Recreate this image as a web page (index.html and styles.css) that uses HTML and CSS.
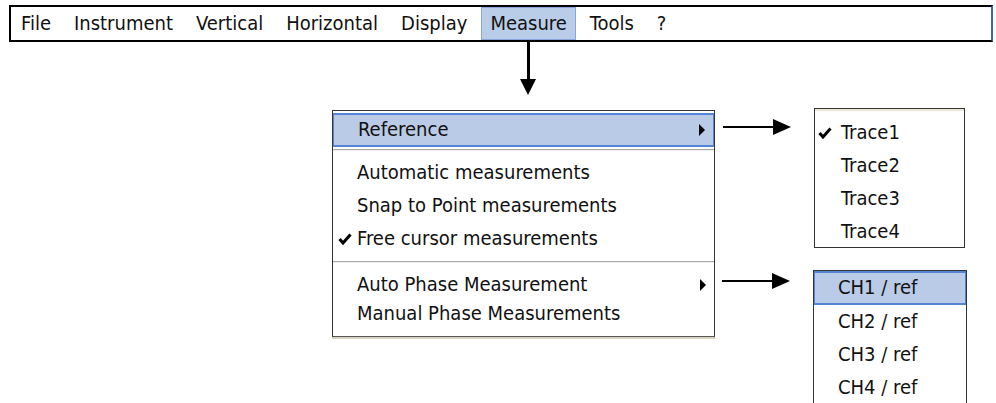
FILE: index.html
```html
<!DOCTYPE html>
<html>
<head>
<meta charset="utf-8">
<link rel="stylesheet" href="styles.css">
</head>
<body>
<div class="page">
  <div class="menubar">
    <span class="mi">File</span>
    <span class="mi">Instrument</span>
    <span class="mi">Vertical</span>
    <span class="mi">Horizontal</span>
    <span class="mi">Display</span>
    <span class="mi active">Measure</span>
    <span class="mi">Tools</span>
    <span class="mi">?</span>
  </div>

  <svg class="arrow arrow-down" width="20" height="54" viewBox="0 0 20 54">
    <rect x="9" y="0" width="3" height="38" fill="#000"/>
    <polygon points="2,37 18,37 10,53" fill="#000"/>
  </svg>

  <div class="menu main-menu">
    <div class="item hl">Reference<span class="sub"></span></div>
    <div class="sep sep1"></div>
    <div class="item">Automatic measurements</div>
    <div class="item">Snap to Point measurements</div>
    <div class="item"><svg class="check" width="14" height="12" viewBox="0 0 14 12"><polyline points="1.5,6 5,10 12.5,1.5" fill="none" stroke="#000" stroke-width="3"/></svg>Free cursor measurements</div>
    <div class="sep sep2"></div>
    <div class="item short">Auto Phase Measurement<span class="sub"></span></div>
    <div class="item short">Manual Phase Measurements</div>
  </div>

  <svg class="arrow arrow-r1" width="70" height="16" viewBox="0 0 70 16">
    <rect x="0" y="7" width="52" height="2" fill="#000"/>
    <polygon points="50,0 68,8 50,16" fill="#000"/>
  </svg>
  <svg class="arrow arrow-r2" width="70" height="16" viewBox="0 0 70 16">
    <rect x="0" y="7" width="52" height="2" fill="#000"/>
    <polygon points="50,0 68,8 50,16" fill="#000"/>
  </svg>

  <div class="menu trace-menu">
    <div class="item"><svg class="check" width="14" height="12" viewBox="0 0 14 12"><polyline points="1.5,6 5,10 12.5,1.5" fill="none" stroke="#000" stroke-width="3"/></svg>Trace1</div>
    <div class="item">Trace2</div>
    <div class="item">Trace3</div>
    <div class="item">Trace4</div>
  </div>

  <div class="menu ch-menu">
    <div class="item hl">CH1 / ref</div>
    <div class="item">CH2 / ref</div>
    <div class="item">CH3 / ref</div>
    <div class="item">CH4 / ref</div>
  </div>
</div>
</body>
</html>
```

FILE: styles.css
```css
* { box-sizing: border-box; }
html, body { margin: 0; padding: 0; background: #fff; }
body {
  font-family: "DejaVu Sans Condensed", "DejaVu Sans", sans-serif;
  font-size: 20px;
  color: #111;
}
.page {
  position: relative;
  width: 996px;
  height: 403px;
  overflow: hidden;
  padding-top: 5px;
}
.menubar {
  margin-left: 9px;
  width: 984px;
  height: 37px;
  border: 2px solid #000;
  border-right: 2px solid #3b63d6;
  display: flex;
  align-items: center;
  padding-left: 1px;
  gap: 5px;
}
.mi {
  height: 33px;
  line-height: 31px;
  padding: 0 8px;
  border: 1px solid transparent;
}
.mi.active {
  background: #bacde8;
  border-color: #86a6dc;
}
.arrow { position: absolute; }
.arrow-down { left: 518px; top: 42px; }
.arrow-r1 { left: 723px; top: 119px; }
.arrow-r2 { left: 722px; top: 273px; }

.menu {
  position: absolute;
  background: #fff;
  border: 1px solid #333;
}
.item {
  position: relative;
  height: 33px;
  line-height: 33px;
  padding-left: 24px;
  white-space: nowrap;
}
.item.short {
  height: 29px;
  line-height: 29px;
}
.item.hl {
  background: #b9cbe6;
  border: 1px solid #5584d4;
  border-top-width: 2px;
  border-bottom-width: 2px;
  line-height: 29px;
  height: 34px;
}
.check {
  position: absolute;
  left: 5px;
  top: 11px;
}
.sub {
  position: absolute;
  right: 8px;
  top: 50%;
  margin-top: -6px;
  width: 0;
  height: 0;
  border-top: 6px solid transparent;
  border-bottom: 6px solid transparent;
  border-left: 6px solid #000;
}
.sep {
  height: 1px;
  background: #a8a7a5;
  box-shadow: 0 1px 0 #eeeeee;
}
.sep1 { margin: 2px 0 6px; }
.sep2 { margin: 6px 0 8px; }
.main-menu {
  left: 332px;
  top: 110px;
  width: 383px;
  height: 227px;
  padding-top: 2px;
  border-bottom: 1px solid #555;
  box-shadow: 0 2px 0 #d8d3c0;
}
.trace-menu {
  left: 814px;
  top: 108px;
  width: 151px;
  height: 140px;
  padding-top: 7px;
  box-shadow: inset 0 2px 0 #ece9dc;
}
.trace-menu .item { padding-left: 26px; }
.trace-menu .check { left: 3px; }
.ch-menu {
  left: 813px;
  top: 270px;
  width: 154px;
  height: 160px;
}
.ch-menu .item { padding-left: 24px; }
.ch-menu .item.hl { padding-left: 23px; }
```
